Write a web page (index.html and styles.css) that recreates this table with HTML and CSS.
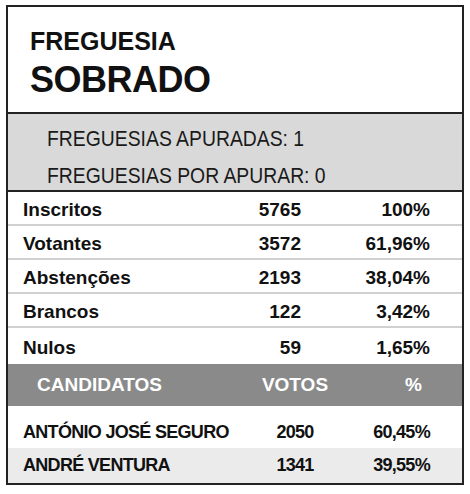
FILE: index.html
```html
<!DOCTYPE html>
<html lang="pt">
<head>
<meta charset="utf-8">
<link rel="stylesheet" href="styles.css">
</head>
<body>
<div class="card">
  <div class="title">
    <div class="title-small">FREGUESIA</div>
    <div class="title-big">SOBRADO</div>
  </div>
  <div class="status">
    <div class="status-line"><span>FREGUESIAS APURADAS: 1</span></div>
    <div class="status-line"><span>FREGUESIAS POR APURAR: 0</span></div>
  </div>
  <div class="stats">
    <div class="stat-row"><span class="lbl">Inscritos</span><span class="num">5765</span><span class="pct">100%</span></div>
    <div class="stat-row"><span class="lbl">Votantes</span><span class="num">3572</span><span class="pct">61,96%</span></div>
    <div class="stat-row"><span class="lbl">Abstenções</span><span class="num">2193</span><span class="pct">38,04%</span></div>
    <div class="stat-row"><span class="lbl">Brancos</span><span class="num">122</span><span class="pct">3,42%</span></div>
    <div class="stat-row last"><span class="lbl">Nulos</span><span class="num">59</span><span class="pct">1,65%</span></div>
  </div>
  <div class="cand-head">
    <span class="ch-name">CANDIDATOS</span><span class="ch-votes">VOTOS</span><span class="ch-pct">%</span>
  </div>
  <div class="cand-row">
    <span class="c-name">ANTÓNIO JOSÉ SEGURO</span><span class="c-votes">2050</span><span class="c-pct">60,45%</span>
  </div>
  <div class="cand-row alt">
    <span class="c-name">ANDRÉ VENTURA</span><span class="c-votes">1341</span><span class="c-pct">39,55%</span>
  </div>
</div>
</body>
</html>
```

FILE: styles.css
```css
html, body {
  margin: 0;
  padding: 0;
  background: #fff;
}
body {
  font-family: "Liberation Sans", Arial, sans-serif;
  color: #111;
}
.card {
  margin: 5px 0 0 6px;
  width: 454px;
  border: 2px solid #222;
  display: flex;
  flex-direction: column;
}
.title {
  padding: 19px 0 12px 22px;
  border-bottom: 2px solid #222;
  font-weight: bold;
}
.title-small {
  font-size: 25px;
  line-height: 30px;
}
.title-big {
  margin-top: 4px;
  font-size: 36px;
  line-height: 40px;
  letter-spacing: -0.5px;
}
.status {
  background: #d9d9d9;
  height: 78px;
  box-sizing: border-box;
  padding: 6px 0 0 39px;
  border-bottom: 2px solid #222;
}
.status-line {
  font-size: 22px;
  line-height: 37px;
  color: #1a1a1a;
}
.status-line span {
  display: inline-block;
  transform: scaleX(0.88);
  transform-origin: left center;
  white-space: nowrap;
}
.stats {
  display: flex;
  flex-direction: column;
}
.stat-row {
  display: grid;
  grid-template-columns: 1fr 100px 129px;
  padding: 3px 32px 0 15px;
  height: 34px;
  box-sizing: border-box;
  align-items: center;
  border-bottom: 2px solid #d0d0d0;
  font-weight: bold;
  font-size: 19px;
}
.stat-row.last {
  height: 36px;
  border-bottom: none;
}
.num, .pct {
  text-align: right;
}
.cand-head {
  display: grid;
  grid-template-columns: 1fr 90px 90px;
  padding: 0 32px 0 15px;
  height: 42px;
  align-items: center;
  background: #8a8a8a;
  color: #fff;
  font-weight: bold;
  font-size: 19px;
}
.ch-name {
  padding-left: 14px;
}
.ch-votes {
  text-align: center;
}
.ch-pct {
  text-align: right;
  padding-right: 8px;
}
.cand-row {
  display: grid;
  grid-template-columns: 1fr 90px 90px;
  padding: 10px 32px 0 15px;
  height: 42px;
  align-items: center;
  font-weight: bold;
  font-size: 18px;
  letter-spacing: -0.7px;
  box-sizing: border-box;
}
.cand-row.alt {
  background: #ebebeb;
  height: 35px;
  padding-top: 0;
}
.c-votes {
  text-align: center;
}
.c-pct {
  text-align: right;
}
```
